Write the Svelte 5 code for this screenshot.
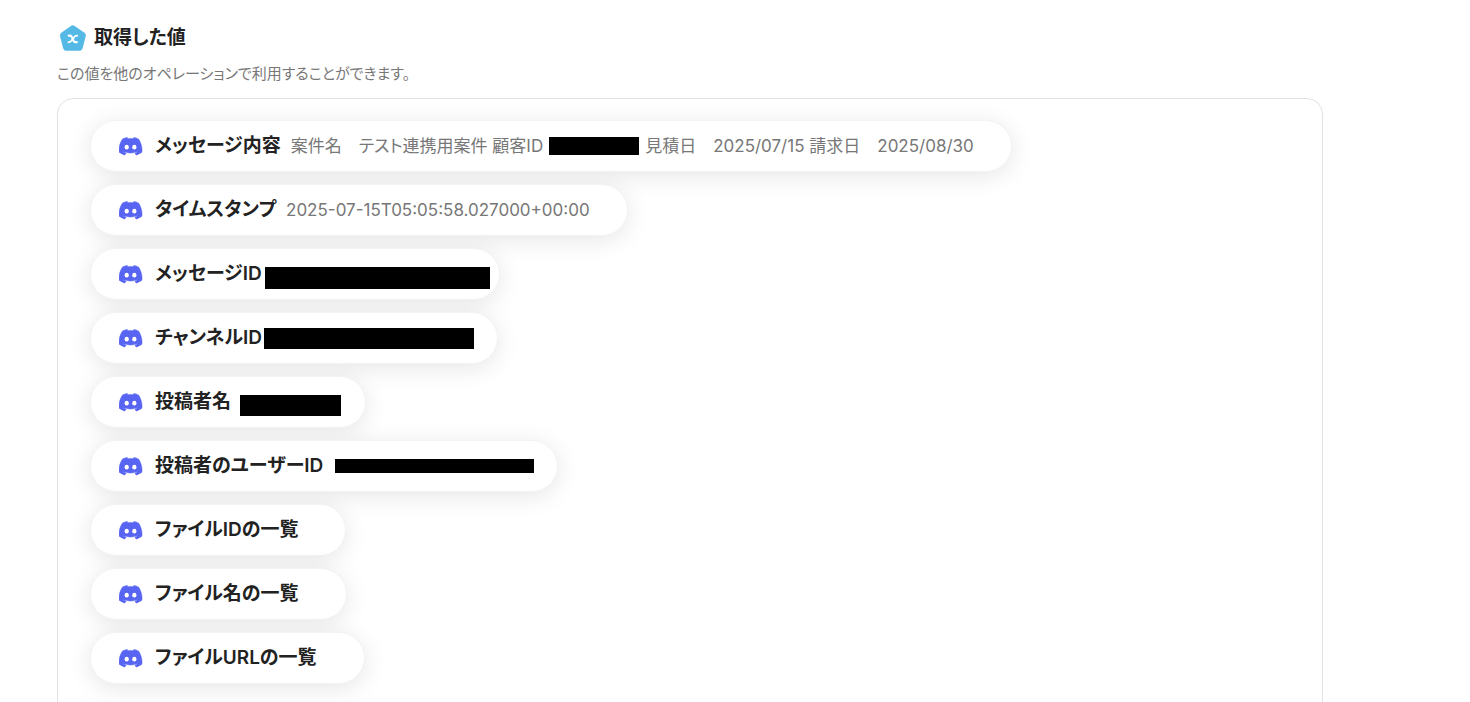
<script>
  const items = [
    {
      name: 'メッセージ内容',
      value: '案件名　テスト連携用案件 顧客ID',
      mask: { inline: true, width: 90, height: 18 },
      rest: '見積日　2025/07/15 請求日　2025/08/30'
    },
    { name: 'タイムスタンプ', value: '2025-07-15T05:05:58.027000+00:00' },
    { name: 'メッセージID', slot: 190, mask: { left: -7, top: -7, width: 225, height: 22 } },
    { name: 'チャンネルID', slot: 188, mask: { left: -8, top: -10, width: 210, height: 21 } },
    { name: '投稿者名', slot: 87, mask: { left: -1, top: -7, width: 101, height: 21 } },
    { name: '投稿者のユーザーID', slot: 187, mask: { left: 2, top: -7, width: 199, height: 14 } },
    { name: 'ファイルIDの一覧' },
    { name: 'ファイル名の一覧' },
    { name: 'ファイルURLの一覧' }
  ];
</script>

<main class="page">
  <header class="heading">
    <svg class="badge" viewBox="0 0 28 28" aria-hidden="true">
      <path
        d="M11.9 1.9a3.2 3.2 0 0 1 3.8 0l9.8 6.9a3.2 3.2 0 0 1 1.2 3.6l-3.2 12.1a3.2 3.2 0 0 1-3 2.3H7.2a3.2 3.2 0 0 1-3-2.3L1.1 12.4a3.2 3.2 0 0 1 1.2-3.6z"
        fill="#55b9e6"
      />
      <path
        d="M9.6 11.6h1.5c.9 0 1.3.5 1.7 1.3l1.8 4c.4.9.8 1.3 1.7 1.3h1.4"
        fill="none"
        stroke="#fff"
        stroke-width="2.2"
        stroke-linecap="round"
      />
      <path
        d="M18.2 11.7c-1.3-.3-2.2.3-3.1 1.5l-2.5 3.3c-.9 1.2-1.8 1.9-3.2 1.6"
        fill="none"
        stroke="#fff"
        stroke-width="1.7"
        stroke-linecap="round"
      />
    </svg>
    <h1>取得した値</h1>
  </header>
  <p class="lead">この値を他のオペレーションで利用することができます。</p>

  <ul class="panel">
    {#each items as item}
      <li class="pill">
        <svg class="discord" viewBox="0 -0.8 25 25" aria-hidden="true">
          <path
            fill="#5865f2"
            stroke="#5865f2"
            stroke-width="0.5"
            stroke-linejoin="round"
            d="M20.317 4.3698a19.7913 19.7913 0 0 0-4.8851-1.5152.0741.0741 0 0 0-.0785.0371c-.211.3753-.4447.8648-.6083 1.2495-1.8447-.2762-3.68-.2762-5.4868 0-.1636-.3933-.4058-.8742-.6177-1.2495a.077.077 0 0 0-.0785-.037 19.7363 19.7363 0 0 0-4.8852 1.515.0699.0699 0 0 0-.0321.0277C.5334 9.0458-.319 13.5799.0992 18.0578a.0824.0824 0 0 0 .0312.0561c2.0528 1.5076 4.0413 2.4228 5.9929 3.0294a.0777.0777 0 0 0 .0842-.0276c.4616-.6304.8731-1.2952 1.226-1.9942a.076.076 0 0 0-.0416-.1057c-.6528-.2476-1.2743-.5495-1.8722-.8923a.077.077 0 0 1-.0076-.1277c.1258-.0943.2517-.1923.3718-.2914a.0743.0743 0 0 1 .0776-.0105c3.9278 1.7933 8.18 1.7933 12.0614 0a.0739.0739 0 0 1 .0785.0095c.1202.099.246.1981.3728.2924a.077.077 0 0 1-.0066.1276 12.2986 12.2986 0 0 1-1.873.8914.0766.0766 0 0 0-.0407.1067c.3604.698.7719 1.3628 1.225 1.9932a.076.076 0 0 0 .0842.0286c1.961-.6067 3.9495-1.5219 6.0023-3.0294a.077.077 0 0 0 .0313-.0552c.5004-5.177-.8382-9.6739-3.5485-13.6604a.061.061 0 0 0-.0312-.0286z"
          />
          <ellipse cx="8.02" cy="12.9" rx="2.2" ry="2.4" fill="#fff" />
          <ellipse cx="16" cy="12.9" rx="2.2" ry="2.4" fill="#fff" />
        </svg>
        <span class="name">{item.name}</span>
        {#if item.mask?.inline}
          <span class="value">
            <span>{item.value}</span>
            <span class="mask" style:width="{item.mask.width}px" style:height="{item.mask.height}px"></span>
            <span>{item.rest}</span>
          </span>
        {:else if item.mask}
          <span class="slot" style:width="{item.slot}px">
            <span
              class="mask over"
              style:left="{item.mask.left}px"
              style:top="{item.mask.top}px"
              style:width="{item.mask.width}px"
              style:height="{item.mask.height}px"
            ></span>
          </span>
        {:else}
          <span class="value">{item.value ?? ''}</span>
        {/if}
      </li>
    {/each}
  </ul>
</main>

<style>
  :global(body) {
    margin: 0;
    background: #fff;
  }
  .page {
    padding: 24px 147px 0 57px;
    font-family: Inter, 'Noto Sans CJK JP', sans-serif;
    font-feature-settings: 'palt';
    color: #222;
  }
  .heading {
    display: flex;
    align-items: center;
    gap: 7px;
    padding-left: 2px;
    height: 28px;
  }
  .badge {
    width: 28px;
    height: 28px;
    flex: none;
  }
  h1 {
    margin: 0;
    font-size: 19px;
    line-height: 26px;
    font-weight: 600;
  }
  .lead {
    margin: 10px 0 0;
    font-size: 15px;
    line-height: 24px;
    color: #777;
  }
  .panel {
    list-style: none;
    margin: 12px 0 0;
    padding: 21px 32px 48px;
    border: 1px solid #e2e2e2;
    border-radius: 16px;
    display: flex;
    flex-direction: column;
    align-items: flex-start;
    gap: 12px;
  }
  .pill {
    box-sizing: border-box;
    display: flex;
    align-items: center;
    height: 52px;
    padding: 0 37px 0 28px;
    border: 1px solid #f3f3f3;
    border-radius: 26px;
    background: #fff;
    box-shadow: 0 4px 24px rgba(0, 0, 0, 0.1);
    white-space: nowrap;
  }
  .discord {
    width: 24px;
    height: 24px;
    flex: none;
    margin-right: 12px;
  }
  .name {
    margin-right: 10px;
    font-size: 19px;
    line-height: 28px;
    font-weight: 600;
  }
  .value {
    display: flex;
    align-items: center;
    gap: 6px;
    font-size: 17px;
    line-height: 24px;
    color: #777;
  }
  .slot {
    position: relative;
  }
  .mask {
    display: block;
    background: #000;
  }
  .over {
    position: absolute;
  }
</style>
